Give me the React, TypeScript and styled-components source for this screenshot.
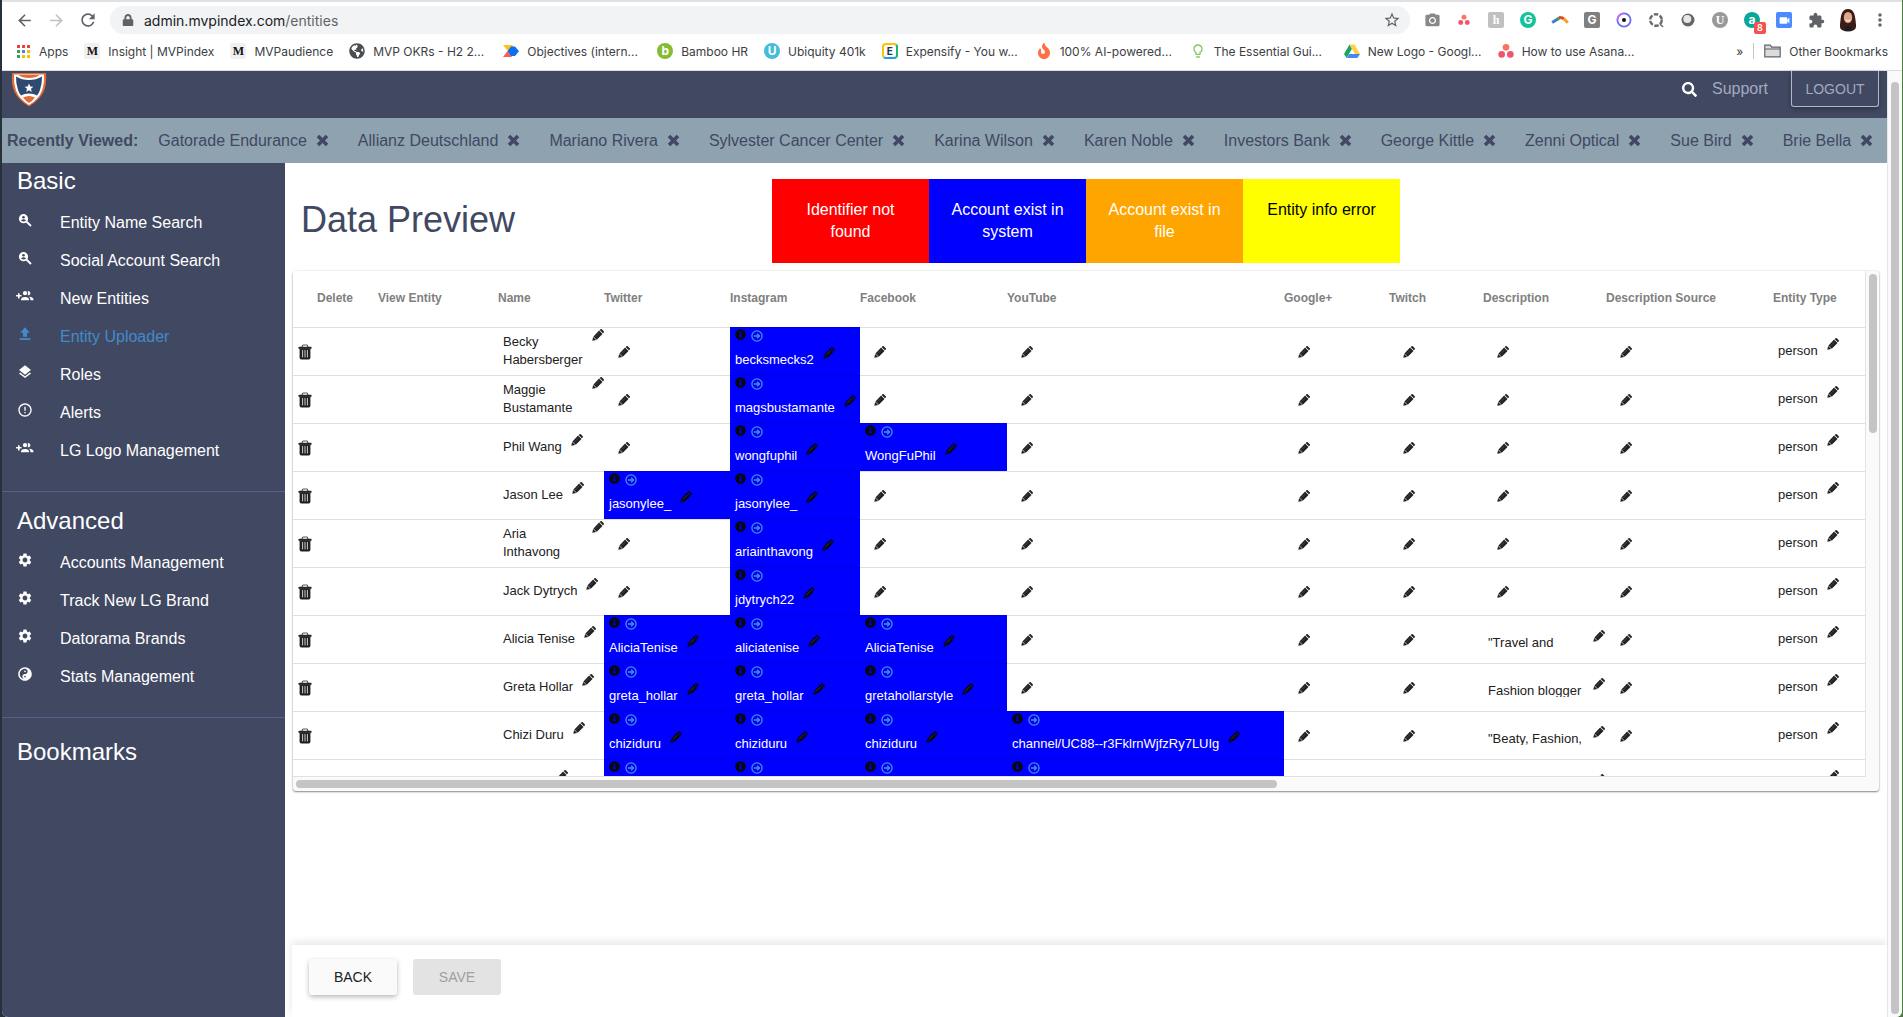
import React from 'react';
import styled, { createGlobalStyle } from 'styled-components';
import { FaSearch, FaInfoCircle, FaYinYang, FaLock, FaFire, FaGlobeAmericas } from 'react-icons/fa';
import {
  MdArrowBack, MdArrowForward, MdRefresh, MdStarBorder, MdPhotoCamera, MdExtension, MdMoreVert,
  MdLayers, MdErrorOutline, MdSettings, MdVideocam, MdLightbulbOutline,
} from 'react-icons/md';

const navy = '#414862';
const slate = '#8fa2b0';
const sans = '"Liberation Sans", Arial, sans-serif';
const ui = 'Inter, Roboto, sans-serif';

const GlobalStyle = createGlobalStyle`
  *, *::before, *::after { box-sizing: border-box; }
  html, body { margin: 0; background: #1b2228; }
  body { font-family: ${sans}; font-size: 16px; color: #212121; overflow: hidden; }
  button { font-family: inherit; cursor: pointer; }
  a { color: inherit; text-decoration: none; }
  svg { display: block; flex: none; }
`;

const Desktop = styled.div`
  height: 100vh;
  padding: 0 1px 0 2px;
  background: linear-gradient(90deg, #27313a 50%, #4e7a44 50%);
`;
const Browser = styled.div`
  height: 100%;
  display: flex;
  flex-direction: column;
  overflow: hidden;
  background: #fff;
  border-top: 2px solid #dee1e6;
  border-radius: 0 0 6px 6px;
`;

/* ---- browser chrome ---- */
const Toolbar = styled.div`
  display: flex;
  align-items: center;
  height: 36px;
  padding-left: 6px;
  padding-right: 6px;
  font-family: ${ui};
`;
const Slot = styled.button<{ $tint?: string }>`
  position: relative;
  flex: none;
  width: 32px;
  height: 28px;
  padding: 0;
  border: 0;
  background: none;
  display: flex;
  align-items: center;
  justify-content: center;
  color: ${p => p.$tint || '#5f6368'};
`;
const AddressBar = styled.div`
  flex: 1;
  display: flex;
  align-items: center;
  gap: 8px;
  height: 28px;
  margin: 0 6px;
  padding: 0 2px 0 10px;
  border-radius: 14px;
  background: #f1f3f4;
  color: #5f6368;
`;
const LockBox = styled.span`
  display: flex;
  width: 16px;
  justify-content: center;
`;
const Url = styled.span`
  flex: 1;
  font-size: 14px;
  b { font-weight: 400; color: #202124; }
`;
const Chip = styled.span<{ $bg: string; $fg?: string; $round?: boolean; $serif?: boolean }>`
  flex: none;
  display: flex;
  align-items: center;
  justify-content: center;
  width: 16px;
  height: 16px;
  border-radius: ${p => (p.$round ? '50%' : '2px')};
  background: ${p => p.$bg};
  color: ${p => p.$fg || '#fff'};
  font: 700 12px/16px ${p => (p.$serif ? '"Liberation Serif", serif' : ui)};
`;
const FramedChip = styled(Chip)`
  border: 2px solid;
  border-color: #fdc500 #1fb36b #1c9ee8 #fdc500;
  border-radius: 4px;
  font-size: 10px;
`;
const Badge = styled.span`
  position: absolute;
  right: 2px;
  bottom: 0;
  width: 12px;
  height: 12px;
  border-radius: 2px;
  background: #f4524d;
  color: #fff;
  font: 600 9px/12px ${ui};
  text-align: center;
`;
const BookmarkBar = styled.nav`
  display: flex;
  align-items: center;
  gap: 16px;
  height: 33px;
  padding: 0 14px 6px 13px;
  border-bottom: 1px solid #dadce0;
  font-family: ${ui};
  font-size: 12px;
  color: #3c4043;
  white-space: nowrap;
`;
const Bookmark = styled.a<{ $cut?: boolean }>`
  display: flex;
  align-items: center;
  gap: 8px;
  width: ${p => (p.$cut ? '138px' : 'auto')};
`;
const BookmarkEnd = styled.div`
  margin-left: auto;
  display: flex;
  align-items: center;
  gap: 10px;
`;
const ThinLine = styled.span`
  width: 1px;
  height: 16px;
  background: #c4c7ca;
`;

/* ---- page ---- */
const Viewport = styled.div`
  flex: 1;
  min-height: 0;
  display: flex;
`;
const Page = styled.div`
  flex: 1;
  min-width: 0;
  display: flex;
  flex-direction: column;
`;
const PageScroll = styled.div`
  width: 15px;
  padding: 11px 3px 3px 3px;
  border-left: 1px solid #e6e6e6;
  background: #fafafa;
`;
const Thumb = styled.div<{ $w?: string; $h?: string }>`
  width: ${p => p.$w || '8px'};
  height: ${p => p.$h || '8px'};
  border-radius: 4px;
  background: #c4c4c4;
`;
const Header = styled.header`
  display: flex;
  align-items: flex-start;
  height: 47px;
  padding: 0 8px 0 9px;
  background: ${navy};
`;
const HeaderTools = styled.div`
  margin-left: auto;
  display: flex;
  align-items: center;
  height: 36px;
  color: #a3a9c0;
  a { margin: 0 23px 0 15px; }
  > svg { color: #fff; }
`;
const Logout = styled.button`
  width: 88px;
  height: 36px;
  border: 1px solid #b3b8cb;
  border-top: 0;
  border-radius: 0 0 3px 3px;
  background: ${navy};
  color: #a3a9c0;
  font-size: 14px;
  box-shadow: 0 2px 5px rgba(0, 0, 0, 0.3);
`;
const Recent = styled.div`
  display: flex;
  align-items: center;
  gap: 29px;
  height: 45px;
  padding-left: 5px;
  background: ${slate};
  color: ${navy};
  white-space: nowrap;
  overflow: hidden;
`;
const RecentLabel = styled.strong`
  margin-right: -9px;
`;
const RecentItem = styled.span`
  display: flex;
  align-items: center;
  gap: 9px;
`;
const IconButton = styled.button<{ $lift?: boolean }>`
  flex: none;
  padding: 0;
  border: 0;
  background: none;
  color: inherit;
  margin-top: ${p => (p.$lift ? '-4px' : '0')};
`;
const Body = styled.div`
  flex: 1;
  min-height: 0;
  display: flex;
`;
const Sidebar = styled.aside`
  flex: none;
  width: 283px;
  background: ${navy};
  color: #fff;
`;
const Section = styled.section`
  padding: 4px 0 22px;
  & + & { border-top: 1px solid #56608a; padding-top: 15px; }
  & + &:last-child { padding-top: 20px; }
`;
const SectionTitle = styled.h2`
  margin: 0 0 8px;
  padding-left: 15px;
  font-size: 24px;
  line-height: 28px;
  font-weight: 400;
`;
const NavLink = styled.a<{ $active?: boolean }>`
  display: grid;
  grid-template-columns: 43px 1fr;
  align-items: center;
  height: 38px;
  padding: 2px 0 0 15px;
  color: ${p => (p.$active ? '#428bca' : '#fff')};
`;
const NavIcon = styled.span`
  display: flex;
  justify-content: center;
  width: 16px;
  padding-bottom: 6px;
`;
const Main = styled.main`
  flex: 1;
  min-width: 0;
  display: flex;
  flex-direction: column;
`;
const TitleRow = styled.div`
  display: grid;
  grid-template-columns: 1fr auto 1fr;
  padding: 16px 16px 8px;
`;
const Title = styled.h1`
  margin: 0;
  padding-top: 21px;
  font-size: 36px;
  line-height: 40px;
  font-weight: 400;
  color: ${navy};
`;
const Legend = styled.div`
  display: flex;
`;
const LegendBox = styled.div<{ $bg: string; $dark?: boolean }>`
  width: 157px;
  height: 84px;
  padding: 20px;
  line-height: 22px;
  text-align: center;
  background: ${p => p.$bg};
  color: ${p => (p.$dark ? '#000' : '#fff')};
`;
const Card = styled.div`
  display: grid;
  grid-template-columns: 1fr 14px;
  margin: 0 8px;
  border-radius: 3px;
  background: #fafafa;
  box-shadow: 0 1px 2px rgba(0, 0, 0, 0.45), 0 0 2px rgba(0, 0, 0, 0.12);
`;
const TableView = styled.div`
  height: 506px;
  overflow: hidden;
  background: #fff;
  border-bottom: 1px solid #e0e0e0;
`;
const VTrack = styled.div`
  padding: 3px 2px 0 3px;
  border-left: 1px solid #e4e4e4;
`;
const HTrack = styled.div`
  grid-column: 1 / -1;
  height: 14px;
  padding: 3px 0 0 3px;
`;
const Table = styled.table`
  width: 100%;
  table-layout: fixed;
  border-spacing: 0;
  font-size: 13px;
  line-height: 18px;
`;
const Th = styled.th<{ $w?: number; $pad?: number }>`
  width: ${p => (p.$w ? `${p.$w}px` : 'auto')};
  height: 56px;
  padding: 0 0 2px ${p => p.$pad || 0}px;
  font-size: 12px;
  text-align: left;
  white-space: nowrap;
  color: #808080;
`;
const Td = styled.td<{ $blue?: boolean }>`
  padding: 0;
  border-top: 1px solid rgba(0, 0, 0, 0.12);
  background: ${p => (p.$blue ? '#00f' : 'transparent')};
  vertical-align: top;
`;
const IconCell = styled.div<{ $left: number }>`
  display: flex;
  align-items: center;
  height: 47px;
  padding-left: ${p => p.$left}px;
`;
const TextCell = styled.div`
  display: flex;
  align-items: center;
  height: 47px;
  padding: 0 0 2px 5px;
`;
const Pair = styled.div`
  display: flex;
  align-items: flex-start;
  gap: 9px;
`;
const Blank = styled.span<{ $w: number }>`
  width: ${p => p.$w}px;
  height: 18px;
`;
const Account = styled.div`
  height: 47px;
  padding: 0 0 0 5px;
  color: #080810;
`;
const AccountIcons = styled.div`
  display: flex;
  gap: 5px;
  height: 23px;
  padding-top: 1px;
  a { padding-top: 1px; color: #4a90d9; }
`;
const Handle = styled.span`
  color: #fff;
  white-space: nowrap;
`;
const Describe = styled(Pair)`
  height: 47px;
  padding: 18px 0 0 5px;
`;
const Excerpt = styled.span`
  width: 96px;
  height: 15px;
  overflow: hidden;
  white-space: nowrap;
`;
const Footer = styled.footer`
  display: flex;
  gap: 16px;
  height: 72px;
  margin: auto 0 0 7px;
  padding: 14px 17px;
  background: #fff;
  box-shadow: 0 -3px 8px rgba(0, 0, 0, 0.1);
`;
const FooterButton = styled.button`
  width: 88px;
  height: 36px;
  border: 0;
  border-radius: 3px;
  background: #fafafa;
  color: #212121;
  font-size: 14px;
  box-shadow: 0 2px 5px rgba(0, 0, 0, 0.28);
  &:disabled { background: #e3e3e3; color: #a0a0a0; box-shadow: none; }
`;

/* ---- drawings ---- */
const Pencil = () => (
  <svg width="12" height="12" viewBox="0 0 16 16" fill="currentColor">
    <path d="M.4 15.8 1.500 10.500 5.700 14.600z" />
    <path d="M1.900 9.900 9.500 2 14 6.500 6.300 14.200z" />
    <path d="M10.200 1.400 11.400.300q.9-.6 1.700.1l2.500 2.500q.7.800.1 1.700L14.600 5.800z" />
    <path d="M4.400 10.800 10.400 4.800" stroke="#999" strokeOpacity=".45" strokeWidth=".9" />
  </svg>
);
const Trash = () => (
  <svg width="14" height="16" viewBox="0 0 14 16">
    <path d="M4.200 3V2.200Q4.200 1 5.400 1h3.200q1.200 0 1.200 1.200V3" fill="none" stroke="#555" strokeWidth="1.200" />
    <path d="M.5 2.800h13v2H.5z" fill="#212121" />
    <path d="M1.600 4.500h10.800v9.300q0 1.700-1.700 1.700H3.300q-1.700 0-1.700-1.700z" fill="#212121" />
    <path d="M4.600 6v7.400M7 6v7.400M9.400 6v7.400" stroke="#ccc" strokeWidth="1" />
  </svg>
);
const Cross = () => (
  <svg width="13" height="13" viewBox="0 0 13 13">
    <path d="M2 2l9 9M11 2l-9 9" stroke="currentColor" strokeWidth="3.600" />
  </svg>
);
const GoCircle = () => (
  <svg width="12" height="12" viewBox="0 0 12 12" fill="none" stroke="currentColor" strokeWidth="1.300">
    <circle cx="6" cy="6" r="5.100" />
    <path d="M3 6h5M6.200 3.800 8.500 6 6.200 8.200" />
  </svg>
);
const PersonLens = () => (
  <svg width="14" height="14" viewBox="0 0 14 14">
    <circle cx="5.500" cy="5.700" r="4.600" fill="currentColor" />
    <circle cx="5.500" cy="4.200" r="1.300" fill={navy} />
    <path d="M2.900 7.400Q5.500 5 8.100 7.400 5.500 9.600 2.900 7.400z" fill={navy} />
    <path d="M8.600 8.800 13 13" stroke="currentColor" strokeWidth="1.900" />
  </svg>
);
const GroupPlus = () => (
  <svg width="18" height="12" viewBox="0 0 18 12" fill="currentColor">
    <path d="M2 3.200h1.600v1.900h1.900v1.500H3.600v1.900H2V6.600H.1V5.100H2z" />
    <circle cx="9" cy="3.200" r="2.100" />
    <path d="M4.900 10.200q0-3.300 4.100-3.300t4.100 3.300z" />
    <path d="M11.600 1.200a2.100 2.100 0 1 1 0 4Q12.800 3.200 11.600 1.200z" />
    <path d="M13 6.800q4.600.3 4.600 3.400h-3.100q0-2.300-1.500-3.400z" />
  </svg>
);
const Upload = () => (
  <svg width="16" height="16" viewBox="0 0 24 24" fill="currentColor">
    <path d="M9 16h6v-6h4l-7-8-7 8h4zM4 18.500h16v2.400H4z" />
  </svg>
);
const Shield = () => (
  <svg width="36" height="36" viewBox="0 0 36 36">
    <path d="M1 2h34q1 10-2 18Q29 29 18 35.500Q7 29 3 20 0 12 1 2z" fill="#e06c36" />
    <path d="M3 3.500h30q.6 9-2 16Q28 28 18 34 8 28 5 19.500 2.400 12 3 3.500z" fill="#fff" />
    <path d="M5 5.500q6 3.500 13 3.500t13-3.500q.2 7-2 13.500-1 3-3 5.500-3-2-8-2t-8 2q-2-2.500-3-5.500Q4.800 12.500 5 5.500z" fill="#2f4a70" />
    <path d="M7.500 4h21Q25 7 18 7T7.500 4zM12 26.500q6-3 12 0-2.500 3.500-6 5.500-3.500-2-6-5.500z" fill="#e06c36" />
    <path d="m18 12.500 1.300 2.900 3.100.3-2.400 2.100.7 3.100-2.700-1.600-2.700 1.600.7-3.100-2.400-2.100 3.100-.3z" fill="#fff" />
  </svg>
);
const Asana = ({ size = 14 }: { size?: number }) => (
  <svg width={size} height={size} viewBox="0 0 14 14">
    <circle cx="7" cy="3.800" r="2.900" fill="#f9735f" />
    <circle cx="3.200" cy="10" r="2.900" fill="#f2546f" />
    <circle cx="10.800" cy="10" r="2.900" fill="#f2546f" />
  </svg>
);
const AppsGrid = () => {
  const c = ['#ea4335', '#ea4335', '#ea4335', '#34a058', '#4285f4', '#fbbc04', '#34a058', '#fbbc04', '#fbbc04'];
  return (
    <svg width="16" height="16" viewBox="0 0 16 16">
      {c.map((fill, i) => (
        <rect key={i} x={2 + (i % 3) * 5} y={2 + Math.floor(i / 3) * 5} width="3" height="3" fill={fill} />
      ))}
    </svg>
  );
};
const Drive = () => (
  <svg width="16" height="16" viewBox="0 0 16 16">
    <path d="M5.500 1.500 0 11l2.600 4L8 5.800z" fill="#1da462" />
    <path d="M5.500 1.500h5L16 11h-5.200z" fill="#ffcf48" />
    <path d="M5.200 11H16l-2.600 4H2.600z" fill="#4688f4" />
  </svg>
);
const Flag = () => (
  <svg width="16" height="16" viewBox="0 0 16 16">
    <path d="M0 2h9l4 5H4z" fill="#fcc419" />
    <path d="M0 14 4.500 8 9 14z" fill="#ff5a4f" />
    <path d="M8 3.500h4l4 4.800-4 4.700H8L4.500 8z" fill="#0b6ff0" />
  </svg>
);
const Folder = () => (
  <svg width="17" height="14" viewBox="0 0 17 14">
    <path d="M.8 12.800V1.200h5.500l1.400 2h8.500v9.600z" fill="#dcdcdc" stroke="#5f6368" strokeWidth="1.200" />
    <path d="M1 5h15" stroke="#5f6368" />
  </svg>
);
const Arc = () => (
  <svg width="18" height="12" viewBox="0 0 18 12" fill="none" strokeWidth="3">
    <path d="M1.200 8.500 6.800 5" stroke="#3a7bd5" />
    <path d="M6 5.400 9 3.600" stroke="#36a852" />
    <path d="M8.200 3.500q3.200-.2 5 1.800" stroke="#ea4335" />
    <path d="M12.600 4.800q2.400 1.600 4 4" stroke="#f4a11d" />
  </svg>
);
const Orbit = () => (
  <svg width="16" height="16" viewBox="0 0 16 16">
    <circle cx="8" cy="8" r="6.600" fill="none" stroke="#6a6cf6" strokeWidth="1.800" />
    <path d="M8 1.400A6.600 6.600 0 0 0 1.400 8" fill="none" stroke="#c86cf0" strokeWidth="1.800" />
    <circle cx="8" cy="8" r="2" fill="#111" />
  </svg>
);
const Dashed = () => (
  <svg width="16" height="16" viewBox="0 0 16 16" fill="none" stroke="#6b6b6b">
    <circle cx="8" cy="8" r="5.800" strokeWidth="2.400" strokeDasharray="4.600 1.500" />
    <path d="m12 12 3 3" strokeWidth="1.500" />
  </svg>
);
const Sphere = () => (
  <svg width="14" height="14" viewBox="0 0 14 14">
    <circle cx="7" cy="7" r="6.500" fill="#666" />
    <circle cx="6.300" cy="6" r="4" fill="#e6e6e6" />
  </svg>
);
const Avatar = () => (
  <svg width="20" height="24" viewBox="0 0 20 24">
    <path d="M10 1C4 1 3 7 2.500 12S1 20 4 22q6 3 12 0c3-2 2-5 1.500-10S16 1 10 1z" fill="#3a1d18" />
    <ellipse cx="10" cy="9.500" rx="4.200" ry="5.500" fill="#e2a88c" />
    <path d="M7.500 12q2.500 2 5 0" stroke="#fff" fill="none" />
    <path d="M6 21q4-6 8 0l-1 2H7z" fill="#1c1c22" />
  </svg>
);

/* ---- data ---- */
const bookmarks: { label: string; icon: React.ReactNode; cut?: boolean }[] = [
  { label: 'Apps', icon: <AppsGrid /> },
  { label: 'Insight | MVPindex', icon: <Chip $bg="#f0f0f0" $fg="#111" $serif>M</Chip> },
  { label: 'MVPaudience', icon: <Chip $bg="#f0f0f0" $fg="#111" $serif>M</Chip> },
  { label: 'MVP OKRs - H2 2...', icon: <FaGlobeAmericas size={16} color="#4a4d51" />, cut: true },
  { label: 'Objectives (intern...', icon: <Flag />, cut: true },
  { label: 'Bamboo HR', icon: <Chip $bg="#84bd32" $round>b</Chip> },
  { label: 'Ubiquity 401k', icon: <Chip $bg="#45bcd8" $round>U</Chip> },
  { label: 'Expensify - You w...', icon: <FramedChip $bg="#fff" $fg="#25364a">E</FramedChip>, cut: true },
  { label: '100% AI-powered...', icon: <FaFire size={16} color="#ff6f43" />, cut: true },
  { label: 'The Essential Gui...', icon: <MdLightbulbOutline size={16} color="#8cc66a" />, cut: true },
  { label: 'New Logo - Googl...', icon: <Drive />, cut: true },
  { label: 'How to use Asana...', icon: <Asana size={16} />, cut: true },
];
const recent = [
  'Gatorade Endurance', 'Allianz Deutschland', 'Mariano Rivera', 'Sylvester Cancer Center', 'Karina Wilson',
  'Karen Noble', 'Investors Bank', 'George Kittle', 'Zenni Optical', 'Sue Bird', 'Brie Bella',
];
const sections = [
  {
    title: 'Basic',
    items: [
      { label: 'Entity Name Search', icon: <PersonLens /> },
      { label: 'Social Account Search', icon: <PersonLens /> },
      { label: 'New Entities', icon: <GroupPlus /> },
      { label: 'Entity Uploader', icon: <Upload />, active: true },
      { label: 'Roles', icon: <MdLayers size={16} /> },
      { label: 'Alerts', icon: <MdErrorOutline size={16} /> },
      { label: 'LG Logo Management', icon: <GroupPlus /> },
    ],
  },
  {
    title: 'Advanced',
    items: [
      { label: 'Accounts Management', icon: <MdSettings size={16} /> },
      { label: 'Track New LG Brand', icon: <MdSettings size={16} /> },
      { label: 'Datorama Brands', icon: <MdSettings size={16} /> },
      { label: 'Stats Management', icon: <FaYinYang size={14} /> },
    ],
  },
  { title: 'Bookmarks', items: [] },
];
const columns: [string, number?, number?][] = [
  ['Delete', 85, 24], ['View Entity', 120], ['Name', 106], ['Twitter', 126], ['Instagram', 130], ['Facebook', 147],
  ['YouTube', 277], ['Google+', 105], ['Twitch', 94], ['Description', 123], ['Description Source', 167], ['Entity Type'],
];
type Row = { name?: string; tw?: string; ig?: string; fb?: string; yt?: string; about?: string };
const rows: Row[] = [
  { name: 'Becky Habersberger', ig: 'becksmecks2' },
  { name: 'Maggie Bustamante', ig: 'magsbustamante' },
  { name: 'Phil Wang', ig: 'wongfuphil', fb: 'WongFuPhil' },
  { name: 'Jason Lee', tw: 'jasonylee_', ig: 'jasonylee_' },
  { name: 'Aria Inthavong', ig: 'ariainthavong' },
  { name: 'Jack Dytrych', ig: 'jdytrych22' },
  { name: 'Alicia Tenise', tw: 'AliciaTenise', ig: 'aliciatenise', fb: 'AliciaTenise', about: '"Travel and' },
  { name: 'Greta Hollar', tw: 'greta_hollar', ig: 'greta_hollar', fb: 'gretahollarstyle', about: 'Fashion blogger' },
  {
    name: 'Chizi Duru', tw: 'chiziduru', ig: 'chiziduru', fb: 'chiziduru',
    yt: 'channel/UC88--r3FklrnWjfzRy7LUIg', about: '"Beaty, Fashion,',
  },
  { tw: '', ig: '', fb: '', yt: '', about: '' },
];

const Edit = ({ lift }: { lift?: boolean }) => (
  <IconButton $lift={lift} aria-label="Edit"><Pencil /></IconButton>
);
const AccountCell = ({ value }: { value?: string }) =>
  value === undefined ? (
    <Td><IconCell $left={14}><Edit /></IconCell></Td>
  ) : (
    <Td $blue>
      <Account>
        <AccountIcons>
          <FaInfoCircle size={11} />
          <a href="#account" aria-label="Open account"><GoCircle /></a>
        </AccountIcons>
        {value && <Pair><Handle>{value}</Handle><Edit lift /></Pair>}
      </Account>
    </Td>
  );

export default function App() {
  return (
    <Desktop>
      <GlobalStyle />
      <Browser>
        <Toolbar>
          <Slot aria-label="Back"><MdArrowBack size={19} /></Slot>
          <Slot aria-label="Forward" $tint="#bdc1c6"><MdArrowForward size={19} /></Slot>
          <Slot aria-label="Reload"><MdRefresh size={20} /></Slot>
          <AddressBar>
            <LockBox><FaLock size={12} /></LockBox>
            <Url><b>admin.mvpindex.com</b>/entities</Url>
            <Slot aria-label="Bookmark this page"><MdStarBorder size={18} /></Slot>
          </AddressBar>
          <Slot aria-label="Camera" $tint="#888"><MdPhotoCamera size={17} /></Slot>
          <Slot aria-label="Asana"><Asana size={12} /></Slot>
          <Slot aria-label="Honey"><Chip $bg="#c0c0c0" $serif>h</Chip></Slot>
          <Slot aria-label="Grammarly"><Chip $bg="#15c39a" $round>G</Chip></Slot>
          <Slot aria-label="Arc"><Arc /></Slot>
          <Slot aria-label="G"><Chip $bg="#808080">G</Chip></Slot>
          <Slot aria-label="Orbit"><Orbit /></Slot>
          <Slot aria-label="Capture"><Dashed /></Slot>
          <Slot aria-label="Sphere"><Sphere /></Slot>
          <Slot aria-label="U"><Chip $bg="#999" $round $serif>U</Chip></Slot>
          <Slot aria-label="Alerts"><Chip $bg="#0aa699" $round>a</Chip><Badge>8</Badge></Slot>
          <Slot aria-label="Zoom"><Chip $bg="#4a8cff"><MdVideocam size={13} /></Chip></Slot>
          <Slot aria-label="Extensions"><MdExtension size={17} /></Slot>
          <Slot aria-label="Profile"><Avatar /></Slot>
          <Slot aria-label="Menu"><MdMoreVert size={20} /></Slot>
        </Toolbar>
        <BookmarkBar>
          {bookmarks.map(b => (
            <Bookmark key={b.label} href="#bookmark" $cut={b.cut}>{b.icon}{b.label}</Bookmark>
          ))}
          <BookmarkEnd>
            <span>»</span>
            <ThinLine />
            <Bookmark href="#other"><Folder />Other Bookmarks</Bookmark>
          </BookmarkEnd>
        </BookmarkBar>
        <Viewport>
          <Page>
            <Header>
              <Shield />
              <HeaderTools>
                <FaSearch size={15} />
                <a href="#support">Support</a>
                <Logout>LOGOUT</Logout>
              </HeaderTools>
            </Header>
            <Recent>
              <RecentLabel>Recently Viewed:</RecentLabel>
              {recent.map(r => (
                <RecentItem key={r}>
                  <a href="#entity">{r}</a>
                  <IconButton aria-label={`Remove ${r}`}><Cross /></IconButton>
                </RecentItem>
              ))}
            </Recent>
            <Body>
              <Sidebar>
                {sections.map(s => (
                  <Section key={s.title}>
                    <SectionTitle>{s.title}</SectionTitle>
                    {s.items.map(i => (
                      <NavLink key={i.label} href="#nav" $active={'active' in i}>
                        <NavIcon>{i.icon}</NavIcon>
                        {i.label}
                      </NavLink>
                    ))}
                  </Section>
                ))}
              </Sidebar>
              <Main>
                <TitleRow>
                  <Title>Data Preview</Title>
                  <Legend>
                    <LegendBox $bg="#f00">Identifier not found</LegendBox>
                    <LegendBox $bg="#00f">Account exist in system</LegendBox>
                    <LegendBox $bg="#ffa500">Account exist in file</LegendBox>
                    <LegendBox $bg="#ff0" $dark>Entity info error</LegendBox>
                  </Legend>
                </TitleRow>
                <Card>
                  <TableView>
                    <Table>
                      <thead>
                        <tr>
                          {columns.map(([label, w, pad]) => <Th key={label} $w={w} $pad={pad}>{label}</Th>)}
                        </tr>
                      </thead>
                      <tbody>
                        {rows.map((r, i) => (
                          <tr key={i}>
                            <Td><IconCell $left={5}><IconButton aria-label="Delete"><Trash /></IconButton></IconCell></Td>
                            <Td />
                            <Td>
                              <TextCell>
                                <Pair>{r.name ? <span>{r.name}</span> : <Blank $w={44} />}<Edit lift /></Pair>
                              </TextCell>
                            </Td>
                            <AccountCell value={r.tw} />
                            <AccountCell value={r.ig} />
                            <AccountCell value={r.fb} />
                            <AccountCell value={r.yt} />
                            <AccountCell />
                            <AccountCell />
                            {r.about === undefined ? (
                              <AccountCell />
                            ) : (
                              <Td><Describe><Excerpt>{r.about}</Excerpt><Edit lift /></Describe></Td>
                            )}
                            <AccountCell />
                            <Td>
                              <TextCell>
                                <Pair>{r.name ? <span>person</span> : <Blank $w={40} />}<Edit lift /></Pair>
                              </TextCell>
                            </Td>
                          </tr>
                        ))}
                      </tbody>
                    </Table>
                  </TableView>
                  <VTrack><Thumb $h="159px" /></VTrack>
                  <HTrack><Thumb $w="62%" /></HTrack>
                </Card>
                <Footer>
                  <FooterButton>BACK</FooterButton>
                  <FooterButton disabled>SAVE</FooterButton>
                </Footer>
              </Main>
            </Body>
          </Page>
          <PageScroll><Thumb $h="100%" /></PageScroll>
        </Viewport>
      </Browser>
    </Desktop>
  );
}
